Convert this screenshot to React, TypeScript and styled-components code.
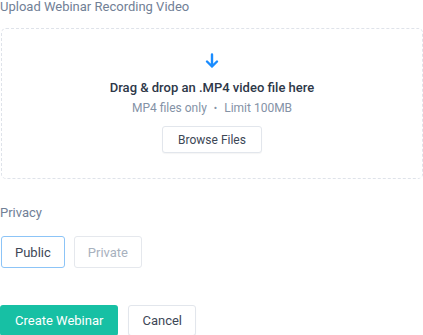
import styled, { createGlobalStyle } from "styled-components";

const GlobalStyle = createGlobalStyle`
  html, body {
    margin: 0;
    padding: 0;
    background: #ffffff;
    font-family: Roboto, "Noto Sans", sans-serif;
  }
`;

function ArrowDown() {
  return (
    <svg width="16" height="16" viewBox="0 0 16 16" fill="none">
      <path
        d="M8 1.5v12M3 8.5l5 5 5-5"
        stroke="#1a8cff"
        strokeWidth="2.4"
        strokeLinecap="round"
        strokeLinejoin="round"
      />
    </svg>
  );
}

function App() {
  return (
    <Page>
      <GlobalStyle />
      <Label>Upload Webinar Recording Video</Label>
      <DropZone>
        <ArrowDown />
        <DropTitle>Drag &amp; drop an .MP4 video file here</DropTitle>
        <DropHint>
          MP4 files only <Dot>•</Dot> Limit 100MB
        </DropHint>
        <Button>Browse Files</Button>
      </DropZone>

      <Section>
        <Label>Privacy</Label>
        <Options>
          <Option $active>Public</Option>
          <Option>Private</Option>
        </Options>
      </Section>

      <Actions>
        <PrimaryButton>Create Webinar</PrimaryButton>
        <Button $large>Cancel</Button>
      </Actions>
    </Page>
  );
}

const Page = styled.div`
  width: 423px;
  display: flex;
  flex-direction: column;
`;

const Label = styled.div`
  font-size: 13px;
  line-height: 14px;
  color: #718096;
`;

const DropZone = styled.div`
  margin: 14px 0 0 1px;
  height: 151px;
  border: 1px dashed #dfe3ea;
  border-radius: 5px;
  display: flex;
  flex-direction: column;
  align-items: center;
  padding-top: 24px;
  box-sizing: border-box;
`;

const DropTitle = styled.div`
  margin-top: 10px;
  font-size: 13px;
  line-height: 18px;
  font-weight: 500;
  color: #2d3748;
`;

const DropHint = styled.div`
  margin-top: 3px;
  font-size: 12px;
  line-height: 16px;
  color: #8492a6;
`;

const Dot = styled.span`
  margin: 0 4px;
  font-size: 10px;
`;

const Button = styled.button<{ $large?: boolean }>`
  margin-top: ${(p) => (p.$large ? "0" : "9px")};
  height: ${(p) => (p.$large ? "31px" : "27px")};
  padding: 0 ${(p) => (p.$large ? "13px" : "15px")};
  background: #fff;
  border: 1px solid #e2e6ec;
  border-radius: 3px;
  box-shadow: 0 1px 1px rgba(0, 0, 0, 0.04);
  font-family: inherit;
  font-size: ${(p) => (p.$large ? "13px" : "12px")};
  color: #3d4756;
`;

const Section = styled.div`
  margin-top: 27px;
  display: flex;
  flex-direction: column;
  gap: 16px;
`;

const Options = styled.div`
  display: flex;
  gap: 9px;
  padding-left: 1px;
`;

const Option = styled.button<{ $active?: boolean }>`
  height: 32px;
  padding: 0 13px;
  background: #fff;
  border: 1px solid ${(p) => (p.$active ? "#8cc4f7" : "#e5e8ed")};
  border-radius: 3px;
  font-family: inherit;
  font-size: 13px;
  color: ${(p) => (p.$active ? "#3d4756" : "#a8b1be")};
`;

const Actions = styled.div`
  margin-top: 37px;
  display: flex;
  gap: 10px;
`;

const PrimaryButton = styled.button`
  height: 31px;
  padding: 0 15px;
  background: #17c0a4;
  border: none;
  border-radius: 3px;
  font-family: inherit;
  font-size: 13px;
  color: #fff;
`;

export default App;
